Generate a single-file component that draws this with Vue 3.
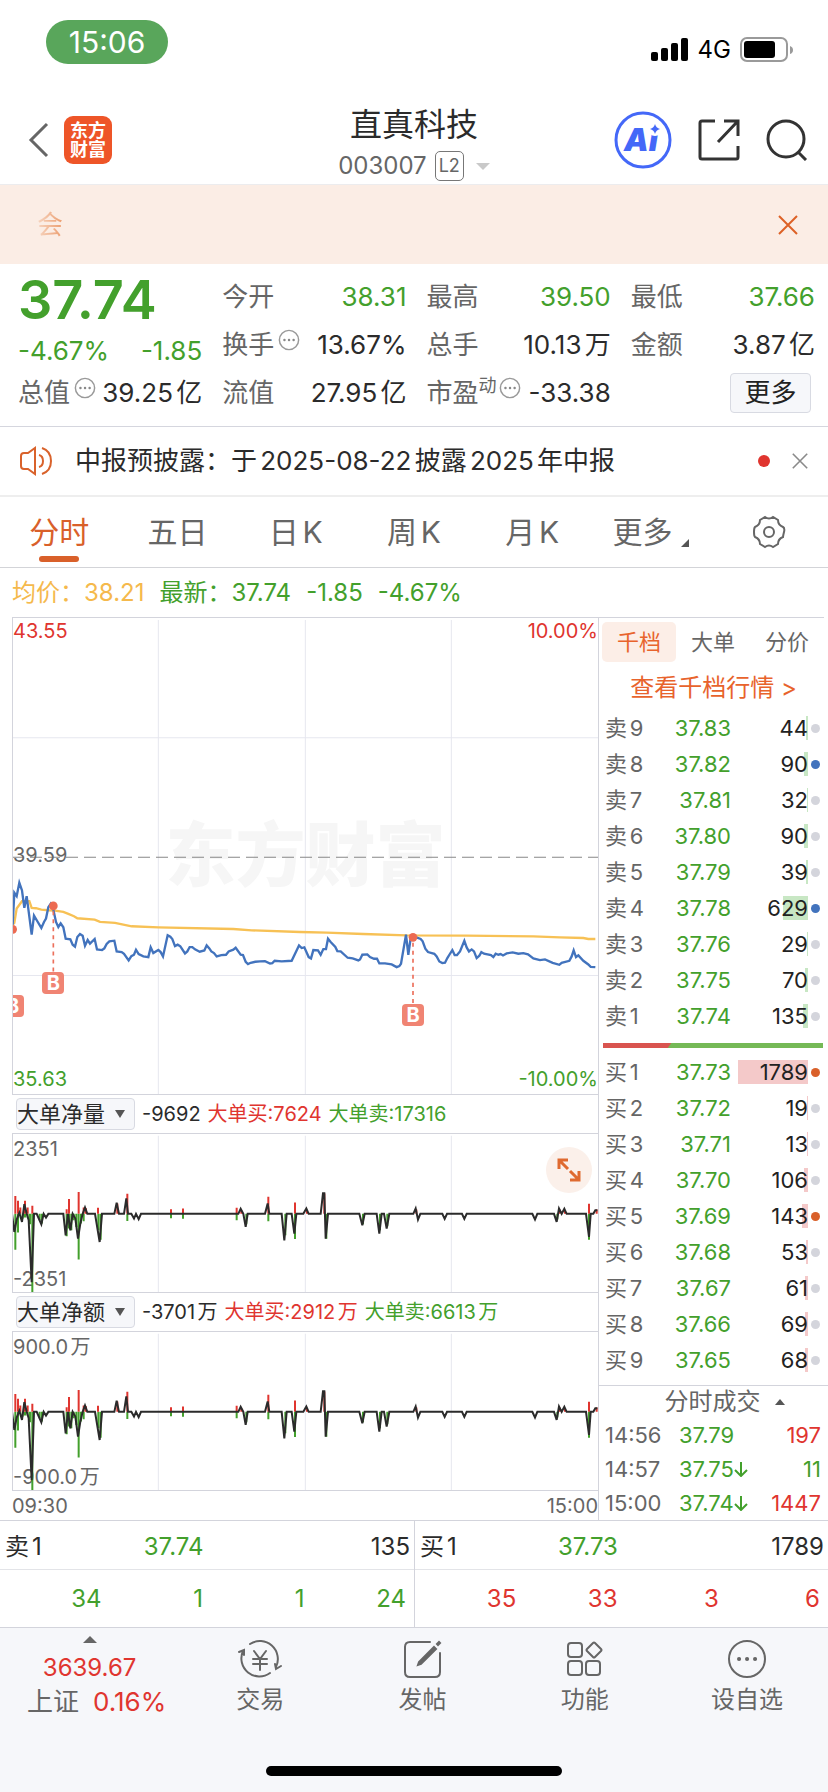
<template>
  <div class="page">
    <!-- Status bar -->
    <div class="status">
      <span class="clock">15:06</span>
      <div class="status-right">
        <svg class="signal" viewBox="0 0 38 24" aria-hidden="true">
          <rect x="0" y="14" width="7" height="9" rx="2" />
          <rect x="10" y="10" width="7" height="13" rx="2" />
          <rect x="20" y="5" width="7" height="18" rx="2" />
          <rect x="30" y="0" width="7" height="23" rx="2" />
        </svg>
        <span class="network">4G</span>
        <svg class="battery" viewBox="0 0 54 26" aria-hidden="true">
          <rect x="1" y="1" width="46" height="23" rx="6" fill="none" stroke="#9a9a9a" stroke-width="2" />
          <rect x="4" y="4" width="31" height="17" rx="3" />
          <path d="M50 9q3 1 3 4t-3 4z" fill="#9a9a9a" />
        </svg>
      </div>
    </div>

    <!-- Header -->
    <header class="header">
      <div class="header-side left">
        <button class="icon-btn" aria-label="返回">
          <svg class="back" viewBox="0 0 22 36"><path d="M19 2L3 18l16 16" /></svg>
        </button>
        <a href="#" class="logo"><span>东方</span><span>财富</span></a>
      </div>
      <div class="title">
        <h1>直真科技</h1>
        <div class="code">
          <span>003007</span>
          <span class="level">L2</span>
          <i class="caret"></i>
        </div>
      </div>
      <div class="header-side right">
        <button class="icon-btn" aria-label="Ai">
          <svg class="ai" viewBox="0 0 58 58">
            <circle cx="29" cy="29" r="27" fill="#fff" stroke="#4468f8" stroke-width="3" />
            <text x="10" y="40" class="ai-text">Ai</text>
            <circle cx="41" cy="18" r="7" fill="#fff" />
            <path d="M41 13q1 4 5 5q-4 1-5 5q-1-4-5-5q4-1 5-5z" fill="#4468f8" />
          </svg>
        </button>
        <button class="icon-btn" aria-label="分享">
          <svg class="share" viewBox="0 0 42 42">
            <path d="M17 2H4q-2 0-2 2v34q0 2 2 2h34q2 0 2-2V27M26 2h14v15M39 3L20 23" />
          </svg>
        </button>
        <button class="icon-btn" aria-label="搜索">
          <svg class="search" viewBox="0 0 42 42">
            <circle cx="20" cy="20" r="18" />
            <path d="M32 33l8 8" />
          </svg>
        </button>
      </div>
    </header>

    <div class="banner">
      <span class="marquee">会</span>
      <button class="icon-btn" aria-label="关闭">
        <svg class="cross orange" viewBox="0 0 20 20"><path d="M1 1l18 18M19 1L1 19" /></svg>
      </button>
    </div>

    <!-- Quote -->
    <section class="quote">
      <div class="quote-main">
        <strong class="price">37.74</strong>
        <div class="change green"><span>-4.67%</span><span>-1.85</span></div>
        <div class="metric">
          <span class="name">总值<InfoDot /></span>
          <span>39.25亿</span>
        </div>
      </div>
      <div class="quote-grid">
        <div v-for="m in metrics" :key="m.name" class="metric">
          <span class="name">{{ m.name }}<small v-if="m.sup">{{ m.sup }}</small><InfoDot v-if="m.info" /></span>
          <span :class="m.color">{{ m.value }}</span>
        </div>
        <div class="metric end"><button class="more">更多</button></div>
      </div>
    </section>

    <!-- Notice -->
    <div class="notice">
      <svg class="speaker" viewBox="0 0 34 30" aria-hidden="true">
        <path d="M2 10q0-3 3-3h4l7-5v26l-7-5H5q-3 0-3-3zM20 9q4 1 4 6t-4 6M23 2q9 3 9 13t-9 13" />
      </svg>
      <a href="#" class="notice-text">中报预披露：于2025-08-22披露2025年中报</a>
      <i class="red-dot"></i>
      <button class="icon-btn" aria-label="关闭">
        <svg class="cross small" viewBox="0 0 20 20"><path d="M1 1l18 18M19 1L1 19" /></svg>
      </button>
    </div>

    <!-- Period tabs -->
    <nav class="tabs">
      <button v-for="t in periods" :key="t" :class="{ active: t === period }" @click="period = t">
        {{ t }}<i v-if="t === '更多'" class="corner"></i>
      </button>
      <button aria-label="设置">
        <svg class="gear" viewBox="0 0 34 34">
          <path d="M13 2q4 3 8 0l5 3q0 5 5 7q2 1 1 5t-1 5q-5 2-5 7l-5 3q-4-3-8 0l-5-3q0-5-5-7q-1-1-1-5t1-5q5-2 5-7z" />
          <circle cx="17" cy="17" r="5" />
        </svg>
      </button>
    </nav>

    <div class="summary">
      <span class="amber">均价：38.21</span>
      <span class="green">最新：37.74</span>
      <span class="green">-1.85</span>
      <span class="green">-4.67%</span>
    </div>

    <main class="board">
      <div class="charts">
        <!-- Intraday price -->
        <div class="chart price-chart">
          <span class="watermark">东方财富</span>
          <svg viewBox="39 -546 1755 1422" preserveAspectRatio="none">
            <path class="grid" d="M475-540V879M916-540V879M1354-540V879M36-188H1794M36 522H1794" />
            <path class="mid" d="M36 169H1794" />
            <polyline class="avg" :points="avgLine" />
            <polyline class="line" :points="priceLine" />
            <g v-for="b in buys" :key="b.x">
              <path v-if="b.stem" class="stem" :d="`M${b.x} ${b.dot + 16}V${b.tag - 33}`" />
              <circle :cx="b.x" :cy="b.dot" r="13" fill="#ec6a52" />
            </g>
          </svg>
          <span v-for="b in buys" :key="b.x" class="buy-tag" :style="tagPos(b)">B</span>
          <span class="lab tl red">43.55</span>
          <span class="lab tr red">10.00%</span>
          <span class="lab ml">39.59</span>
          <span class="lab bl green">35.63</span>
          <span class="lab br green">-10.00%</span>
        </div>

        <!-- Large order flow -->
        <template v-for="(f, i) in flows" :key="f.name">
          <div class="flow-head">
            <label class="picker">
              <select :aria-label="f.name">
                <option>{{ f.name }}</option>
              </select>
              <i class="pick-arrow"></i>
            </label>
            <span>{{ f.net }}</span>
            <span class="red">大单买:{{ f.buy }}</span>
            <span class="green">大单卖:{{ f.sell }}</span>
          </div>
          <div class="chart flow-chart">
            <span class="lab ft">{{ f.max }}</span>
            <span class="lab fb">-{{ f.max }}</span>
            <svg viewBox="39 163 1755 471" preserveAspectRatio="none">
              <path class="grid" d="M475 168V637M916 168V637M1354 168V637" />
              <path class="bar-down" :d="downBars" />
              <path class="bar-up" :d="upBars" />
              <polyline class="flow" :points="flowLine" />
            </svg>
            <button v-if="i === 0" class="expand" aria-label="全屏">
              <svg viewBox="0 0 24 24">
                <path d="M2 11V2h9M2 2l9 9M22 13v9h-9M22 22l-9-9" />
              </svg>
            </button>
          </div>
        </template>
        <div class="times"><span>09:30</span><span>15:00</span></div>
      </div>

      <!-- Order book -->
      <aside class="book">
        <div class="book-tabs">
          <button class="active">千档</button>
          <button>大单</button>
          <button>分价</button>
        </div>
        <a href="#" class="book-link">查看千档行情 &gt;</a>
        <table class="levels sell">
          <tbody>
            <tr v-for="r in sells" :key="r[0]">
              <td>卖{{ r[0] }}</td>
              <td class="green">{{ r[1] }}</td>
              <td class="vol"><i class="depth" :style="{ width: r[3] + 'px' }"></i><span>{{ r[2] }}</span></td>
              <td><i class="dot" :class="r[4]"></i></td>
            </tr>
          </tbody>
        </table>
        <div class="ratio"><i></i></div>
        <table class="levels buy">
          <tbody>
            <tr v-for="r in bids" :key="r[0]">
              <td>买{{ r[0] }}</td>
              <td class="green">{{ r[1] }}</td>
              <td class="vol"><i class="depth" :style="{ width: r[3] + 'px' }"></i><span>{{ r[2] }}</span></td>
              <td><i class="dot" :class="r[4]"></i></td>
            </tr>
          </tbody>
        </table>
        <button class="deals-title">分时成交 <i></i></button>
        <table class="deals">
          <tbody>
            <tr v-for="d in deals" :key="d.time">
              <td>{{ d.time }}</td>
              <td class="green">
                {{ d.price }}<svg v-if="d.down" viewBox="0 0 14 16"><path d="M7 1v14M1 9l6 6 6-6" /></svg>
              </td>
              <td :class="d.color">{{ d.vol }}</td>
            </tr>
          </tbody>
        </table>
      </aside>
    </main>

    <!-- Best bid and ask -->
    <section class="best">
      <div v-for="q in queues" :key="q.name" class="best-half">
        <div class="best-top">
          <span>{{ q.name }}</span><span class="green">{{ q.price }}</span><span>{{ q.vol }}</span>
        </div>
        <div class="best-orders" :class="q.color">
          <span v-for="(n, i) in q.orders" :key="i">{{ n }}</span>
        </div>
      </div>
    </section>

    <footer class="footer">
      <div class="footer-row">
        <button class="index">
          <i></i>
          <span class="red">3639.67</span>
          <span class="index-name">上证<b class="red">0.16%</b></span>
        </button>
        <button class="action">
          <svg viewBox="0 0 44 40">
            <path d="M12 5A18 18 0 0 1 38 28M32 34A18 18 0 0 1 5 12M1 13l5-2 0 5M43 27l-5 3-1-5" />
            <path d="M16 12l6 8 6-8M22 20v11M15 20h14M15 25h14" />
          </svg>
          <span>交易</span>
        </button>
        <button class="action">
          <svg viewBox="0 0 44 40">
            <path d="M29 3H9q-5 0-5 5v25q0 5 5 5h25q5 0 5-5V14" />
            <path d="M33 8l2 2-15 15-3 1 1-3zM36 5l2-2 1 1-2 2z" fill="#666" />
          </svg>
          <span>发帖</span>
        </button>
        <button class="action">
          <svg viewBox="0 0 44 40">
            <rect x="5" y="4" width="14" height="14" rx="3" />
            <rect x="5" y="22" width="14" height="14" rx="3" />
            <rect x="23" y="22" width="14" height="14" rx="3" />
            <path d="M30 4q1-1 2 0l6 6q1 1 0 2l-6 6q-1 1-2 0l-6-6q-1-1 0-2z" />
          </svg>
          <span>功能</span>
        </button>
        <button class="action">
          <svg viewBox="0 0 44 40">
            <circle cx="22" cy="20" r="18" />
            <path d="M14 20h.1M22 20h.1M30 20h.1" stroke-width="4" />
          </svg>
          <span>设自选</span>
        </button>
      </div>
      <div class="home-bar"></div>
    </footer>
  </div>
</template>

<script setup>
import { ref, h } from 'vue'

const InfoDot = () =>
  h('svg', { class: 'info', viewBox: '0 0 24 24', width: 22, height: 22 }, [
    h('circle', { cx: 12, cy: 12, r: 10.5, fill: 'none', stroke: '#999', 'stroke-width': 1.6 }),
    h('path', { d: 'M7 12h.1M12 12h.1M17 12h.1', stroke: '#888', 'stroke-width': 2.6, 'stroke-linecap': 'round' }),
  ])

const periods = ['分时', '五日', '日K', '周K', '月K', '更多']
const period = ref('分时')

const metrics = [
  { name: '今开', value: '38.31', color: 'green' },
  { name: '最高', value: '39.50', color: 'green' },
  { name: '最低', value: '37.66', color: 'green' },
  { name: '换手', value: '13.67%', info: true },
  { name: '总手', value: '10.13万' },
  { name: '金额', value: '3.87亿' },
  { name: '流值', value: '27.95亿' },
  { name: '市盈', value: '-33.38', sup: '动', info: true },
]

const flows = [
  { name: '大单净量', net: '-9692', buy: '7624', sell: '17316', max: '2351' },
  { name: '大单净额', net: '-3701万', buy: '2912万', sell: '6613万', max: '900.0万' },
]

// level, price, volume, depth width, marker
const sells = [
  [9, '37.83', 44, 2, ''],
  [8, '37.82', 90, 4, 'blue'],
  [7, '37.81', 32, 1, ''],
  [6, '37.80', 90, 4, ''],
  [5, '37.79', 39, 2, ''],
  [4, '37.78', 629, 25, 'blue'],
  [3, '37.76', 29, 1, ''],
  [2, '37.75', 70, 3, ''],
  [1, '37.74', 135, 5, ''],
]
const bids = [
  [1, '37.73', 1789, 70, 'orange'],
  [2, '37.72', 19, 1, ''],
  [3, '37.71', 13, 1, ''],
  [4, '37.70', 106, 4, ''],
  [5, '37.69', 143, 6, 'orange'],
  [6, '37.68', 53, 2, ''],
  [7, '37.67', 61, 3, ''],
  [8, '37.66', 69, 3, ''],
  [9, '37.65', 68, 3, ''],
]

const deals = [
  { time: '14:56', price: '37.79', vol: '197', color: 'red' },
  { time: '14:57', price: '37.75', vol: '11', color: 'green', down: true },
  { time: '15:00', price: '37.74', vol: '1447', color: 'red', down: true },
]

const queues = [
  { name: '卖1', price: '37.74', vol: '135', color: 'green', orders: [34, 1, 1, 24] },
  { name: '买1', price: '37.73', vol: '1789', color: 'red', orders: [35, 33, 3, 6] },
]

// buy marks share the chart's viewBox units
const buys = [
  { x: 38, dot: 384, tag: 614, stem: false },
  { x: 160, dot: 314, tag: 545, stem: true },
  { x: 1239, dot: 408, tag: 640, stem: true },
]
const tagPos = (b) => ({
  left: ((b.x - 39) / 1755) * 100 + '%',
  top: ((b.tag + 546) / 1422) * 100 + '%',
})

const avgLine =
  '38,370 43,365 50,322 66,300 88,300 95,320 108,321 124,325 145,327 165,328 190,332 205,338 222,345 232,351 284,355 300,362 345,365 395,375 475,378 700,383 755,387 900,392 980,394 1090,398 1220,402 1400,403 1600,405 1680,408 1750,410 1765,413 1786,413'

const priceLine =
  '38,370 43,275 50,285 58,245 66,268 73,320 80,285 95,400 102,343 112,360 124,380 132,362 138,352 145,318 152,308 160,325 168,362 175,377 182,366 190,378 197,412 211,414 218,430 225,436 232,407 240,398 248,403 255,433 263,416 270,427 284,413 291,444 306,446 313,441 320,428 328,420 343,418 350,450 365,452 372,457 386,477 394,464 402,460 408,445 416,458 430,465 445,467 452,438 460,455 475,446 482,452 489,465 503,402 511,406 517,413 525,434 533,430 541,435 555,456 562,450 569,437 577,437 585,444 599,451 613,447 620,432 628,441 634,450 642,455 650,465 664,461 678,460 686,450 700,445 707,439 722,460 729,461 737,481 744,488 752,484 766,481 780,480 795,479 810,486 817,485 824,478 845,480 875,478 897,432 905,440 913,438 926,467 933,471 940,446 954,447 962,460 970,443 978,443 984,412 992,422 1006,437 1012,449 1022,450 1043,469 1058,471 1075,477 1080,474 1087,460 1102,459 1110,467 1122,472 1131,472 1138,486 1155,486 1175,489 1190,497 1198,494 1203,487 1218,400 1225,460 1232,410 1240,405 1262,413 1268,420 1276,442 1284,452 1303,457 1310,465 1318,480 1327,485 1335,484 1342,470 1350,457 1357,446 1364,461 1371,461 1380,450 1393,418 1400,438 1407,450 1415,444 1422,450 1430,470 1438,463 1444,452 1452,457 1473,461 1480,467 1487,457 1495,460 1502,458 1509,462 1520,456 1538,453 1555,457 1570,455 1584,459 1600,471 1620,476 1635,474 1658,484 1678,490 1685,484 1708,478 1715,465 1721,447 1728,467 1735,462 1750,478 1765,489 1772,496 1786,497'

const flowLine =
  '36,401 43,455 50,418 58,398 66,425 73,372 80,400 86,420 95,605 102,401 110,401 124,432 131,401 138,412 145,401 190,401 197,465 204,401 211,450 218,401 226,415 234,475 241,430 248,401 255,382 262,401 285,401 299,485 306,401 343,401 350,368 357,401 372,401 379,355 384,401 394,401 402,415 408,401 416,417 423,401 715,401 722,386 730,401 737,440 743,401 795,401 803,370 808,401 845,401 853,480 860,401 875,401 883,460 889,401 910,401 919,385 926,401 962,401 969,340 973,340 977,475 984,401 1078,401 1087,435 1094,401 1130,401 1138,460 1145,401 1152,401 1160,445 1168,401 1240,401 1247,385 1254,418 1261,401 1327,401 1334,416 1341,401 1386,401 1393,416 1400,401 1597,401 1605,418 1612,401 1662,401 1670,425 1677,385 1685,401 1693,386 1700,401 1758,401 1767,470 1772,401 1780,401 1786,390 1792,390'

const ups = [
  [46, 348], [54, 362], [61, 382], [75, 362], [83, 382], [97, 377], [200, 387], [207, 357], [236, 336],
  [251, 382], [258, 384], [294, 383], [352, 370], [382, 341], [513, 387], [549, 385], [710, 383], [724, 390],
  [805, 350], [885, 367], [921, 390], [973, 340], [1249, 388], [1679, 388], [1695, 390], [1767, 371], [1790, 388],
]
const downs = [
  [46, 508], [54, 457], [68, 415], [75, 412], [83, 413], [90, 432], [97, 635], [119, 420], [126, 430],
  [200, 468], [207, 445], [214, 450], [221, 420], [229, 440], [236, 537], [243, 430], [251, 423], [295, 450],
  [302, 478], [382, 422], [513, 414], [549, 416], [710, 420], [739, 432], [805, 423], [856, 465], [885, 476],
  [979, 475], [1089, 432], [1140, 450], [1162, 438], [1672, 418], [1767, 478],
]
const toBars = (list) => list.map(([x, y]) => `M${x} 401V${y}`).join('')
const upBars = toBars(ups)
const downBars = toBars(downs)
</script>

<style>
body {
  margin: 0;
  background: #fff;
}
</style>

<style scoped>
.page {
  display: flex;
  flex-direction: column;
  min-height: 100vh;
  font-family: Inter, 'Noto Sans CJK SC', sans-serif;
  font-size: 26px;
  line-height: 36px;
  color: #2b2b2b;
  text-autospace: normal;
  overflow: hidden;
}
button,
select {
  padding: 0;
  border: 0;
  background: none;
  font: inherit;
  color: inherit;
}
a {
  color: inherit;
  text-decoration: none;
}
i {
  font-style: normal;
}
svg {
  display: block;
}
.red {
  color: #e0352f;
}
.green {
  color: #43a02c;
}
.amber {
  color: #f5b94c;
}
.icon-btn {
  display: flex;
}

/* Status bar */
.status {
  display: flex;
  justify-content: space-between;
  height: 72px;
  padding: 20px 34px 0 46px;
  box-sizing: border-box;
}
.clock {
  width: 122px;
  height: 44px;
  border-radius: 22px;
  background: #59a65b;
  color: #fff;
  font-size: 30px;
  line-height: 44px;
  text-align: center;
}
.status-right {
  display: flex;
  align-items: center;
  gap: 9px;
  height: 60px;
  color: #000;
}
.signal {
  width: 38px;
  height: 24px;
}
.network {
  font-size: 24px;
}
.battery {
  width: 54px;
  height: 26px;
}

/* Header */
.header {
  display: grid;
  grid-template-columns: 1fr auto 1fr;
  align-items: center;
  height: 113px;
  padding: 0 20px;
  box-sizing: border-box;
  border-bottom: 1px solid #ececee;
}
.header-side {
  display: flex;
  align-items: center;
  gap: 14px;
  height: 80px;
  padding-top: 24px;
  box-sizing: border-box;
}
.header-side.left {
  padding-left: 8px;
}
.header-side.right {
  justify-content: flex-end;
  gap: 26px;
}
.back {
  width: 22px;
  height: 36px;
  fill: none;
  stroke: #666;
  stroke-width: 3;
}
.logo {
  display: flex;
  flex-direction: column;
  justify-content: center;
  width: 48px;
  height: 48px;
  border-radius: 9px;
  background: #ee5528;
  color: #fff;
  font-size: 18px;
  font-weight: 700;
  line-height: 19px;
  text-align: center;
}
.title {
  padding-top: 30px;
  text-align: center;
}
h1 {
  margin: 0;
  font-size: 32px;
  font-weight: 400;
  line-height: 46px;
}
.code {
  display: flex;
  align-items: center;
  justify-content: center;
  gap: 8px;
  font-size: 24px;
  line-height: 36px;
  color: #666;
}
.level {
  padding: 0 3px;
  border: 1px solid #777;
  border-radius: 5px;
  font-size: 18px;
  line-height: 28px;
}
.caret {
  margin-left: 4px;
  border: 7px solid transparent;
  border-top-color: #c9c9c9;
  border-bottom: 0;
}
.ai {
  width: 58px;
  height: 58px;
}
.ai-text {
  font-family: Inter, sans-serif;
  font-size: 31px;
  font-weight: 900;
  font-style: italic;
  fill: #4468f8;
}
.share,
.search {
  width: 42px;
  height: 42px;
  fill: none;
  stroke: #333;
  stroke-width: 3;
}

.banner {
  display: flex;
  align-items: center;
  justify-content: space-between;
  height: 79px;
  padding: 0 30px 0 37px;
  background: #fbede5;
}
.marquee {
  background: linear-gradient(90deg, #f6d5c1, #ec9d6e);
  background-clip: text;
  color: transparent;
}
.cross {
  width: 20px;
  height: 20px;
  fill: none;
  stroke: #8a8a8a;
  stroke-width: 2;
}
.cross.orange {
  stroke: #dd6126;
}
.cross.small {
  width: 16px;
  height: 16px;
}

/* Quote */
.quote {
  display: grid;
  grid-template-columns: minmax(0, 184fr) minmax(0, 592fr);
  column-gap: 20px;
  height: 163px;
  padding: 9px 13px 0 18px;
  box-sizing: border-box;
  border-bottom: 1px solid #d5d6de;
}
.quote-grid {
  display: grid;
  grid-template-columns: repeat(3, minmax(0, 1fr));
  grid-auto-rows: 48px;
  column-gap: 20px;
}
.price {
  display: block;
  font-size: 54px;
  font-weight: 600;
  line-height: 54px;
  color: #43a02c;
}
.change {
  display: flex;
  justify-content: space-between;
  line-height: 48px;
}
.metric {
  display: flex;
  align-items: center;
  justify-content: space-between;
  white-space: nowrap;
}
.metric.end {
  justify-content: flex-end;
  padding-right: 4px;
}
.name {
  display: flex;
  color: #666;
}
.name small {
  font-size: 18px;
  line-height: 22px;
}
.info {
  margin: 2px 0 0 4px;
}
.name small + .info {
  margin-left: 2px;
}
.more {
  width: 81px;
  height: 40px;
  border: 1px solid #d8dae2;
  border-radius: 4px;
  background: #f6f7fa;
  color: #222;
}

/* Notice */
.notice {
  display: flex;
  align-items: center;
  height: 70px;
  padding: 0 20px 0 19px;
  box-sizing: border-box;
  border-bottom: 2px solid #eee;
}
.speaker {
  width: 34px;
  height: 30px;
  fill: none;
  stroke: #d9622b;
  stroke-width: 2;
}
.notice-text {
  flex: 1;
  padding-left: 22px;
}
.red-dot {
  width: 12px;
  height: 12px;
  margin-right: 22px;
  border-radius: 50%;
  background: #e0352f;
}

/* Tabs */
.tabs {
  display: grid;
  grid-template-columns: repeat(7, 1fr);
  height: 71px;
  box-sizing: border-box;
  border-bottom: 1px solid #d3d4d8;
  font-size: 30px;
  color: #666;
}
.tabs button {
  display: flex;
  align-items: center;
  justify-content: center;
  position: relative;
}
.tabs .active {
  color: #d9602a;
}
.tabs .active::after {
  content: '';
  position: absolute;
  bottom: 5px;
  width: 40px;
  height: 6px;
  border-radius: 3px;
  background: #d9602a;
}
.corner {
  align-self: flex-end;
  margin: 0 0 20px 8px;
  border: 4px solid #555;
  border-top-color: transparent;
  border-left-color: transparent;
}
.gear {
  width: 34px;
  height: 34px;
  fill: none;
  stroke: #666;
  stroke-width: 2;
}
.summary {
  display: flex;
  gap: 15px;
  padding: 0 12px;
  font-size: 24px;
  line-height: 49px;
}

/* Charts */
.board {
  display: grid;
  grid-template-columns: minmax(0, 1fr) 229px;
  padding-left: 12px;
}
.charts {
  border-right: 1px solid #d3d4dc;
  font-size: 20px;
}
.chart {
  position: relative;
  box-sizing: border-box;
  border: 1px solid #d3d4dc;
  border-right: 0;
  overflow: hidden;
}
.chart svg {
  position: relative;
  width: 100%;
  height: 100%;
}
.price-chart {
  height: 478px;
}
.flow-chart {
  height: 160px;
}
.chart polyline,
.chart path {
  fill: none;
}
.grid {
  stroke: #e6e7ef;
  stroke-width: 3;
}
.mid {
  stroke: #888;
  stroke-width: 3;
  stroke-dasharray: 36 18;
}
.avg {
  stroke: #f7c155;
  stroke-width: 7;
}
.line {
  stroke: #4273bd;
  stroke-width: 7;
}
.stem {
  stroke: #ec705c;
  stroke-width: 5;
  stroke-dasharray: 12 12;
}
.bar-up {
  stroke: #e0352f;
  stroke-width: 6;
}
.bar-down {
  stroke: #43a02c;
  stroke-width: 6;
}
.flow {
  stroke: #2b2b2b;
  stroke-width: 6;
}
.watermark {
  position: absolute;
  top: 50%;
  left: 50%;
  transform: translate(-50%, -50%);
  white-space: nowrap;
  font-size: 70px;
  font-weight: 900;
  line-height: 80px;
  color: #f6f6f6;
}
.buy-tag {
  position: absolute;
  width: 22px;
  height: 22px;
  margin: -11px 0 0 -11px;
  border-radius: 4px;
  background: #f08473;
  color: #fff;
  font-weight: 700;
  line-height: 22px;
  text-align: center;
}
.lab {
  position: absolute;
  line-height: 26px;
  color: #666;
}
.lab.red {
  color: #e0352f;
}
.lab.green {
  color: #43a02c;
}
.tl {
  top: 0;
  left: 0;
}
.tr {
  top: 0;
  right: 0;
}
.ml {
  top: 50%;
  left: 0;
  margin-top: -14px;
}
.bl {
  bottom: 2px;
  left: 0;
}
.br {
  right: 0;
  bottom: 2px;
}
.ft {
  top: 2px;
  left: 0;
}
.fb {
  bottom: 0;
  left: 0;
}
.flow-head {
  display: flex;
  align-items: center;
  gap: 7px;
  height: 38px;
  padding-left: 4px;
  white-space: nowrap;
}
.picker {
  position: relative;
  display: block;
}
.picker select {
  display: block;
  width: 119px;
  height: 32px;
  border: 1px solid #d8dae2;
  border-radius: 4px;
  background: #f6f7fa;
  font-size: 22px;
  line-height: 30px;
  appearance: none;
}
.pick-arrow {
  position: absolute;
  top: 12px;
  right: 10px;
  border: 5px solid transparent;
  border-top: 8px solid #555;
  border-bottom: 0;
}
.expand {
  position: absolute;
  top: 13px;
  right: 6px;
  display: flex;
  align-items: center;
  justify-content: center;
  width: 46px;
  height: 46px;
  border-radius: 50%;
  background: #fbf0ea;
}
.expand svg {
  width: 24px;
  height: 24px;
  stroke: #df6a30;
  stroke-width: 3;
}
.times {
  display: flex;
  justify-content: space-between;
  height: 29px;
  line-height: 30px;
  color: #666;
}

/* Order book */
.book {
  font-size: 22px;
}
.book-tabs {
  display: grid;
  grid-template-columns: repeat(3, 1fr);
  margin-right: 4px;
  padding: 4px 0 0 3px;
  border-top: 1px solid #d3d4dc;
  color: #666;
}
.book-tabs button {
  height: 40px;
  border-radius: 5px;
}
.book-tabs .active {
  background: #fceee7;
  color: #e8632c;
}
.book-link {
  display: block;
  height: 48px;
  font-size: 24px;
  line-height: 52px;
  text-align: center;
  color: #e8632c;
}
table {
  width: 100%;
  border-collapse: collapse;
  table-layout: fixed;
}
td {
  padding: 0;
  text-align: right;
  white-space: nowrap;
}
td:first-child {
  padding-left: 6px;
  text-align: left;
  color: #666;
}
.levels tr {
  height: 36px;
}
.levels td:nth-child(1) {
  width: 46px;
}
.levels td:nth-child(2) {
  width: 80px;
}
.levels td:nth-child(4) {
  width: 20px;
}
.vol {
  position: relative;
  color: #222;
}
.depth {
  position: absolute;
  top: 6px;
  right: 0;
  height: 24px;
}
.vol span {
  position: relative;
}
.sell .depth {
  background: #c8e7c4;
}
.buy .depth {
  background: #f4c9c9;
}
.dot {
  display: block;
  width: 9px;
  height: 9px;
  margin-left: 3px;
  border-radius: 50%;
  background: #d4d5dc;
}
.dot.blue {
  background: #4273bd;
}
.dot.orange {
  background: #d9602a;
}
.ratio {
  height: 5px;
  margin: 9px 5px 6px 4px;
  background: #75b956;
}
.ratio i {
  display: block;
  width: 31%;
  height: 5px;
  background: #d9544f;
  clip-path: polygon(0 0, 100% 0, 95% 100%, 0 100%);
}
.deals-title {
  display: flex;
  align-items: center;
  justify-content: center;
  gap: 14px;
  width: 100%;
  height: 33px;
  margin-top: 7px;
  padding-left: 22px;
  border-top: 1px solid #d3d4dc;
  font-size: 24px;
  line-height: 32px;
  color: #666;
}
.deals-title i {
  border: 5px solid transparent;
  border-top: 0;
  border-bottom: 6px solid #555;
}
.deals tr {
  height: 34px;
}
.deals td {
  line-height: 34px;
}
.deals td:first-child {
  width: 70px;
}
.deals td:last-child {
  width: 64px;
  padding-right: 7px;
}
.deals td:nth-child(2) {
  padding-left: 4px;
  text-align: left;
}
.deals svg {
  display: inline-block;
  width: 14px;
  height: 16px;
  fill: none;
  stroke: #43a02c;
  stroke-width: 2;
}

/* Best bid and ask */
.best {
  display: grid;
  grid-template-columns: 1fr 1fr;
  border-top: 1px solid #d3d4dc;
  font-size: 24px;
}
.best-half + .best-half {
  border-left: 1px solid #d3d4dc;
}
.best-top {
  display: grid;
  grid-template-columns: 10fr 39fr 51fr;
  height: 48px;
  padding: 0 4px 0 5px;
  border-bottom: 1px solid #e3e4e8;
  line-height: 52px;
  white-space: nowrap;
}
.best-top span + span {
  text-align: right;
}
.best-orders {
  display: grid;
  grid-template-columns: repeat(4, 1fr);
  height: 57px;
  padding-right: 8px;
  line-height: 57px;
  text-align: right;
}

/* Footer */
.footer {
  display: flex;
  flex: 1;
  flex-direction: column;
  border-top: 1px solid #d3d4dc;
  background: #f6f7fa;
  color: #666;
}
.footer-row {
  display: grid;
  grid-template-columns: 179fr repeat(4, 162fr);
  height: 100px;
}
.index,
.action {
  display: flex;
  flex-direction: column;
  align-items: center;
  font-size: 24px;
  line-height: 34px;
}
.index {
  padding-top: 8px;
}
.index > i {
  margin-bottom: 8px;
  border: 7px solid transparent;
  border-top: 0;
  border-bottom: 7px solid #666;
}
.index-name {
  display: flex;
  gap: 14px;
  padding-left: 14px;
  font-size: 26px;
}
.index b {
  font-weight: 400;
}
.action {
  padding-top: 11px;
}
.action svg {
  width: 44px;
  height: 40px;
  margin-bottom: 4px;
  fill: none;
  stroke: #666;
  stroke-width: 2;
  stroke-linecap: round;
}
.home-bar {
  width: 296px;
  height: 10px;
  margin: auto auto 16px;
  border-radius: 5px;
  background: #000;
}
</style>
